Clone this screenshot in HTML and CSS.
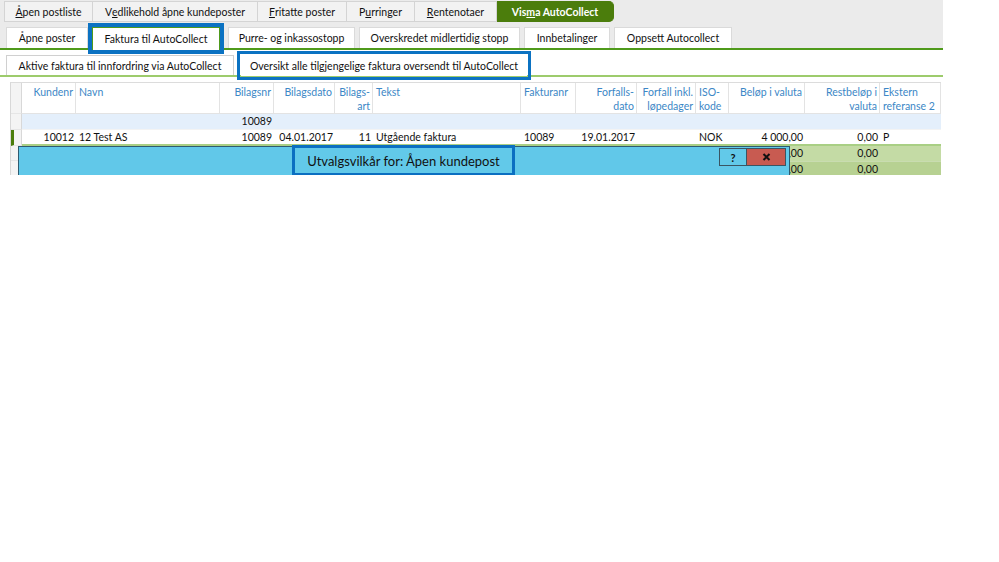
FILE: index.html
```html
<!DOCTYPE html>
<html lang="no">
<head>
<meta charset="utf-8">
<title>Visma AutoCollect</title>
<link rel="stylesheet" href="styles.css">
</head>
<body>
<div class="app">
  <div class="top">
    <div class="tabs1">
      <div class="t1"><u>Å</u>pen postliste</div>
      <div class="t1">V<u>e</u>dlikehold åpne kundeposter</div>
      <div class="t1"><u>F</u>ritatte poster</div>
      <div class="t1">P<u>u</u>rringer</div>
      <div class="t1"><u>R</u>entenotaer</div>
      <div class="t1 active">Vis<u>m</u>a AutoCollect</div>
    </div>
    <div class="tabs2">
      <div class="t2">Åpne poster</div>
      <div class="t2 sel">Faktura til AutoCollect</div>
      <div class="t2">Purre- og inkassostopp</div>
      <div class="t2">Overskredet midlertidig stopp</div>
      <div class="t2">Innbetalinger</div>
      <div class="t2">Oppsett Autocollect</div>
    </div>
  </div>
  <div class="sub">
    <div class="tabs3">
      <div class="t3">Aktive faktura til innfordring via AutoCollect</div>
      <div class="t3 sel">Oversikt alle tilgjengelige faktura oversendt til AutoCollect</div>
    </div>
  </div>
  <div class="gridwrap">
    <div class="grid">
      <div class="h rh"></div>
      <div class="h r">Kundenr</div>
      <div class="h">Navn</div>
      <div class="h r">Bilagsnr</div>
      <div class="h r">Bilagsdato</div>
      <div class="h r">Bilags-<br>art</div>
      <div class="h">Tekst</div>
      <div class="h">Fakturanr</div>
      <div class="h r">Forfalls-<br>dato</div>
      <div class="h r">Forfall inkl.<br>løpedager</div>
      <div class="h">ISO-<br>kode</div>
      <div class="h r">Beløp i valuta</div>
      <div class="h r">Restbeløp i<br>valuta</div>
      <div class="h">Ekstern<br>referanse 2</div>

      <div class="c rh"></div>
      <div class="c f"></div><div class="c f"></div><div class="c f r">10089</div><div class="c f"></div><div class="c f"></div><div class="c f"></div><div class="c f"></div><div class="c f"></div><div class="c f"></div><div class="c f"></div><div class="c f"></div><div class="c f"></div><div class="c f"></div>

      <div class="c rh cur"></div>
      <div class="c d r">10012</div><div class="c d">12 Test AS</div><div class="c d r">10089</div><div class="c d r">04.01.2017</div><div class="c d r">11</div><div class="c d">Utgående faktura</div><div class="c d">10089</div><div class="c d r">19.01.2017</div><div class="c d"></div><div class="c d">NOK</div><div class="c d r">4 000,00</div><div class="c d r">0,00</div><div class="c d">P</div>

      <div class="c rh g"></div>
      <div class="c g1"></div><div class="c g1"></div><div class="c g1"></div><div class="c g1"></div><div class="c g1"></div><div class="c g1"></div><div class="c g1"></div><div class="c g1"></div><div class="c g1"></div><div class="c g1"></div><div class="c g1 r">0,00</div><div class="c g1 r">0,00</div><div class="c g1"></div>

      <div class="c rh g"></div>
      <div class="c g2"></div><div class="c g2"></div><div class="c g2"></div><div class="c g2"></div><div class="c g2"></div><div class="c g2"></div><div class="c g2"></div><div class="c g2"></div><div class="c g2"></div><div class="c g2"></div><div class="c g2 r">0,00</div><div class="c g2 r">0,00</div><div class="c g2"></div>
    </div>
    <div class="panel">
      <div class="ptitle">Utvalgsvilkår for: Åpen kundepost</div>
      <div class="pbtns">
        <div class="pb help">?</div>
        <div class="pb close">
          <svg width="9" height="8" viewBox="0 0 9 8"><path d="M1.5 1 L7.5 7 M7.5 1 L1.5 7" stroke="#111" stroke-width="2"/></svg>
        </div>
      </div>
    </div>
  </div>
</div>
</body>
</html>
```

FILE: styles.css
```css
* { box-sizing: border-box; }
html, body { margin: 0; padding: 0; background: #fff; }
body {
  font-family: Lato, "Open Sans", sans-serif;
  font-size: 10.5px;
  color: #111;
  width: 999px;
  height: 562px;
  overflow: hidden;
}
u { text-decoration: underline; text-underline-offset: 1px; }
.app { width: 943px; height: 175px; overflow: hidden; }

.top { background: #ebebeb; padding-top: 1px; }
.tabs1 { display: flex; padding-left: 4px; height: 21px; }
.t1 {
  height: 21px;
  border: 1px solid #d4d4d4;
  border-left: none;
  background: #f2f2f2;
  display: flex; align-items: center; justify-content: center;
  white-space: nowrap;
}
.t1:first-child { border-left: 1px solid #d4d4d4; width: 89px; }
.t1:nth-child(2) { width: 165px; }
.t1:nth-child(3) { width: 89px; }
.t1:nth-child(4) { width: 68px; }
.t1:nth-child(5) { width: 82px; }
.t1.active {
  width: 117px;
  background: #4b7d0c;
  border-color: #4b7d0c;
  color: #fff;
  font-weight: 700;
  border-radius: 0 5px 5px 0;
}

.tabs2 {
  display: flex; gap: 4px;
  padding: 5px 0 0 6px;
  height: 21px;
  box-sizing: content-box;
  border-bottom: 2px solid #4f9a1b;
}
.t2 {
  height: 21px;
  background: #fff;
  border: 1px solid #dadada;
  border-bottom: none;
  display: flex; align-items: center; justify-content: center;
  white-space: nowrap;
}
.t2:nth-child(1) { width: 82px; }
.t2:nth-child(2) { width: 128px; margin-right: 4px; }
.t2:nth-child(3) { width: 127px; }
.t2:nth-child(4) { width: 161px; }
.t2:nth-child(5) { width: 86px; }
.t2:nth-child(6) { width: 118px; }
.t2.sel {
  border: 1px solid #4f9a1b;
  border-bottom: none;
  height: 23px;
  outline: 4px solid #0b72c2;
  position: relative;
  z-index: 2;
}

.sub { background: #fff; padding-top: 5px; }
.tabs3 {
  display: flex; gap: 7px;
  padding-left: 6px;
  height: 20px;
  box-sizing: content-box;
  border-bottom: 2px solid #9dcb6c;
}
.t3 {
  height: 20px;
  border: 1px solid #d0d0d0;
  border-bottom: none;
  display: flex; align-items: center; justify-content: center;
  background: #fff;
  white-space: nowrap;
}
.t3:nth-child(1) { width: 228px; }
.t3:nth-child(2) {
  width: 286px;
  outline: 3px solid #0b72c2;
  outline-offset: 1px;
  height: 21px;
  border-color: #fff;
  position: relative;
  z-index: 2;
}

.gridwrap { position: relative; margin-top: 5px; padding-left: 10px; }
.grid {
  display: grid;
  grid-template-columns: 11px 54px 144px 54px 61px 38px 148px 55px 61px 59px 33px 76px 75px 61px;
  grid-template-rows: 31px 16px 16px 15px 15px;
  border-top: 1px solid #dcdcdc;
  border-left: 1px solid #d8d8d8;
  width: 931px;
}
.h {
  color: #3c87c6;
  padding: 2px 2px 0 3px;
  line-height: 14px;
  border-right: 1px solid #e3e3e3;
  border-bottom: 1px solid #e3e3e3;
  background: #fff;
  white-space: nowrap;
}
.r { text-align: right; }
.c {
  line-height: 15px;
  padding: 0 2px 0 3px;
  white-space: nowrap;
  overflow: hidden;
}
.rh { background: #f4f4f4; border-right: 1px solid #d8d8d8; border-bottom: 1px solid #e6e6e6; }
.rh.cur { border-left: 3px solid #4b7d0c; }
.f { background: #e4effb; border-bottom: 1px solid #f3f3f3; }
.d { background: #fff; border-bottom: 2px solid #a9cf84; }
.g1 { background: #c4dba5; }
.g2 { background: #b7d192; border-top: 1px solid #c9dcb0; }

.panel {
  position: absolute;
  left: 18px; top: 64px;
  width: 772px; height: 40px;
  background: #61c8e9;
  border: 1px solid #2f5b70;
  border-bottom: none;
}
.ptitle {
  position: absolute;
  left: 273px; top: -2px;
  width: 223px; height: 31px;
  border: 3px solid #0b6fc1;
  background: #62c9e9;
  font-size: 13px;
  display: flex; align-items: center; justify-content: center;
  color: #111;
  white-space: nowrap;
}
.pbtns {
  position: absolute;
  right: 3px; top: 1px;
  display: flex;
}
.pb {
  height: 18px;
  border: 1px solid #3a5563;
  display: flex; align-items: center; justify-content: center;
  font-weight: 700;
  font-size: 11px;
}
.help { width: 27px; background: #62c9e9; border-right: none; }
.close { width: 40px; background: #c85b51; }
```
